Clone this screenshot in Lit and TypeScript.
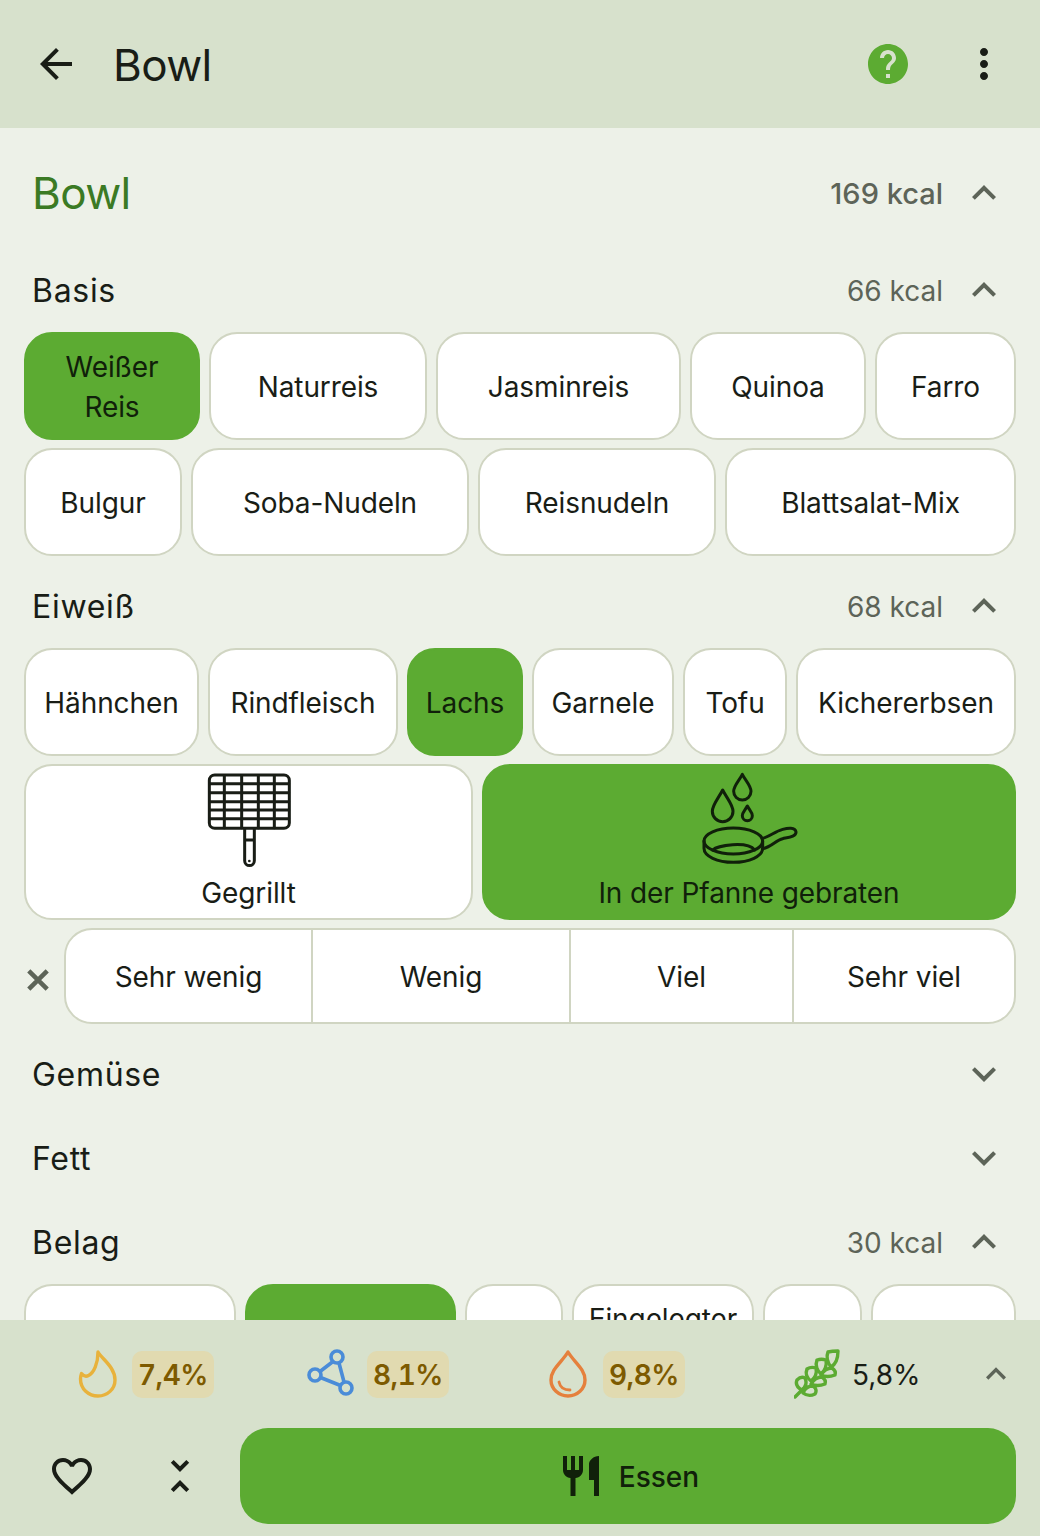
import { css, html, LitElement, svg } from "lit";
import { customElement } from "lit/decorators.js";

const P = {
  back: "M20 11H7.83l5.59-5.59L12 4l-8 8 8 8 1.41-1.41L7.83 13H20v-2z",
  help: "M12 2C6.48 2 2 6.48 2 12s4.48 10 10 10 10-4.48 10-10S17.52 2 12 2zm1 17h-2v-2h2v2zm2.07-7.75l-.9.92C13.45 12.9 13 13.5 13 15h-2v-.5c0-1.1.45-2.1 1.17-2.83l1.24-1.26c.37-.36.59-.86.59-1.41 0-1.1-.9-2-2-2s-2 .9-2 2H8c0-2.21 1.79-4 4-4s4 1.79 4 4c0 .88-.36 1.68-.93 2.25z",
  more: "M12 8c1.1 0 2-.9 2-2s-.9-2-2-2-2 .9-2 2 .9 2 2 2zm0 2c-1.1 0-2 .9-2 2s.9 2 2 2 2-.9 2-2-.9-2-2-2zm0 6c-1.1 0-2 .9-2 2s.9 2 2 2 2-.9 2-2-.9-2-2-2z",
  up: "M12 8l-6 6 1.41 1.41L12 10.83l4.59 4.58L18 14z",
  down: "M16.59 8.59L12 13.17 7.41 8.59 6 10l6 6 6-6z",
  heart: "M16.5 3c-1.74 0-3.41.81-4.5 2.09C10.91 3.81 9.24 3 7.5 3 4.42 3 2 5.42 2 8.5c0 3.78 3.4 6.86 8.55 11.54L12 21.35l1.45-1.32C18.6 15.36 22 12.28 22 8.5 22 5.42 19.58 3 16.5 3zm-4.4 15.55l-.1.1-.1-.1C7.14 14.24 4 11.39 4 8.5 4 6.5 5.5 5 7.5 5c1.54 0 3.04.99 3.57 2.36h1.87C13.46 5.99 14.96 5 16.5 5c2 0 3.5 1.5 3.5 3.5 0 2.89-3.14 5.74-7.9 10.05z",
  unfold: "M7.41 18.59L8.83 20 12 16.83 15.17 20l1.41-1.41L12 14l-4.59 4.59zm9.18-13.18L15.17 4 12 7.17 8.83 4 7.41 5.41 12 10l4.59-4.59z",
  eat: "M11 9H9V2H7v7H5V2H3v7c0 2.12 1.66 3.84 3.75 3.97V22h2.5v-9.03C11.34 12.84 13 11.12 13 9V2h-2v7zm5-3v8h2.5v8H21V2c-2.76 0-5 2.24-5 4z",
};

const icon = (d: string, cls = "") =>
  html`<svg class="icon ${cls}" viewBox="0 0 24 24"><path d=${d} fill="currentColor" /></svg>`;

const grill = html`<svg class="pic" viewBox="-3 12 420 312">
  <g fill="none" stroke="#191d16" stroke-width="9" stroke-linecap="round" stroke-linejoin="round">
    <rect x="88" y="45" width="240" height="160" rx="16" />
    <path d="M133 47v156M185 47v156M235 47v156M283 47v156" />
    <path d="M90 71h236M90 98h236M90 125h236M90 150h236M90 176h236" />
    <path d="M194 207v95a14 14 0 0 0 29 0v-95M194 240h29" />
  </g>
  <circle cx="208" cy="303" r="4" fill="#191d16" />
</svg>`;

const pan = svg`<g fill="none" stroke="#10200a" stroke-width="9" stroke-linecap="round" stroke-linejoin="round">
    <path d="M128 90c-12 24-31 44-31 64a31 31 0 0 0 62 0c0-20-19-40-31-64z" />
    <path d="M187 43c-10 20-26 34-26 51a26 26 0 0 0 52 0c0-17-16-31-26-51z" />
    <path d="M202 138c-6 12-15 19-15 29a15 15 0 0 0 30 0c0-10-9-17-15-29z" />
    <ellipse cx="160" cy="243" rx="88" ry="39" />
    <path d="M72 243v22c0 24 40 42 88 42s88-18 88-42v-22" />
    <path d="M98 270c14-14 104-28 126 0" />
    <path d="M246 236c22-6 40-22 62-28 14-4 38-8 40 8 1 14-22 16-40 20-20 4-32 24-60 30" />
  </g>`;

type Chip = { t?: string; w: number; on?: boolean };

const basis: Chip[][] = [
  [{ t: "Weißer\nReis", w: 176, on: true }, { t: "Naturreis", w: 218 }, { t: "Jasminreis", w: 245 }, { t: "Quinoa", w: 176 }, { t: "Farro", w: 141 }],
  [{ t: "Bulgur", w: 158 }, { t: "Soba-Nudeln", w: 278 }, { t: "Reisnudeln", w: 238 }, { t: "Blattsalat-Mix", w: 291 }],
];
const eiweiss: Chip[] = [
  { t: "Hähnchen", w: 175 }, { t: "Rindfleisch", w: 190 }, { t: "Lachs", w: 116, on: true },
  { t: "Garnele", w: 142 }, { t: "Tofu", w: 104 }, { t: "Kichererbsen", w: 220 },
];
const belag: Chip[] = [
  { w: 212 }, { w: 211, on: true }, { w: 98 }, { t: "Eingelegter", w: 182 }, { w: 99 }, { w: 145 },
];
const amounts = [
  { t: "Sehr wenig", w: 247 }, { t: "Wenig", w: 258 }, { t: "Viel", w: 223 }, { t: "Sehr viel", w: 220 },
];

@customElement("app-root")
export class AppRoot extends LitElement {
  section(title: string, kcal: string, open: boolean) {
    return html`<div class="sec">
      <span class="sec-title">${title}</span>
      <span class="kcal">${kcal}</span>
      ${icon(open ? P.up : P.down, "muted")}
    </div>`;
  }

  row(chips: Chip[]) {
    return html`<div class="row">
      ${chips.map(
        (c) => html`<button class="chip ${c.on ? "on" : ""}" style="flex: 0 0 ${c.w}px">${c.t}</button>`
      )}
    </div>`;
  }

  render() {
    return html`
      <header>
        ${icon(P.back)}
        <h1>Bowl</h1>
        ${icon(P.help, "green")} ${icon(P.more)}
      </header>
      <main>
        <div class="top">
          <span class="top-title">Bowl</span>
          <span class="kcal strong">169 kcal</span>
          ${icon(P.up, "muted")}
        </div>
        ${this.section("Basis", "66 kcal", true)}
        <div class="rows">${basis.map((r) => this.row(r))}</div>
        ${this.section("Eiweiß", "68 kcal", true)}
        <div class="rows">
          ${this.row(eiweiss)}
          <div class="row">
            <button class="chip big" style="flex: 0 0 449px">${grill}<span>Gegrillt</span></button>
            <button class="chip big on" style="flex: 0 0 534px">
              <svg class="pic" viewBox="-3 12 420 312">${pan}</svg><span>In der Pfanne gebraten</span>
            </button>
          </div>
          <div class="amount">
            <svg class="x" viewBox="0 0 24 24"><path d="M5.500 5.500l13 13M18.500 5.500l-13 13" /></svg>
            <div class="seg">
              ${amounts.map((a) => html`<button style="flex: 0 0 ${a.w}px">${a.t}</button>`)}
            </div>
          </div>
        </div>
        ${this.section("Gemüse", "", false)} ${this.section("Fett", "", false)}
        ${this.section("Belag", "30 kcal", true)}
        <div class="row">${belag.map((c) =>
          html`<button class="chip tall ${c.on ? "on" : ""}" style="flex: 0 0 ${c.w}px"><span>${c.t}</span></button>`
        )}</div>
      </main>
      <footer>
        <div class="stats">
          <div class="stat">
            <svg width="40" height="50" viewBox="0 0 40 50"><path d="M20 3c4 7 17 15 17 28 0 9-7.500 16-17 16S2.500 40 2.500 30c0-2.500.500-4 1-5.500 2 2.500 4.500 3.500 7 2C16 24 20 14 20 3z" fill="none" stroke="#e8b23c" stroke-width="3.400" stroke-linejoin="round" /></svg>
            <span class="badge">7,4%</span>
          </div>
          <div class="stat net">
            <svg width="48" height="50" viewBox="0 0 48 50" fill="none" stroke="#4a8cd8" stroke-width="3.600">
              <circle cx="30" cy="8" r="6" /><circle cx="8" cy="26" r="6" /><circle cx="39" cy="39" r="6" />
              <path d="M26 12.500 13 22.500M32 14l5 19M13.500 28.500 33.500 36.500" />
            </svg>
            <span class="badge">8,1%</span>
          </div>
          <div class="stat drop">
            <svg width="38" height="50" viewBox="0 0 38 50" fill="none" stroke="#e5803c" stroke-width="3.400" stroke-linecap="round" stroke-linejoin="round">
              <path d="M19 3C13 13 2 20 2 31a17 16 0 0 0 34 0C36 20 25 13 19 3z" />
              <path d="M10 33c1 5 5 8 11 8" stroke-width="2.800" />
            </svg>
            <span class="badge">9,8%</span>
          </div>
          <div class="stat wheat">
            <svg width="46" height="50" viewBox="0 0 46 50" fill="none" stroke="#5cab32" stroke-width="3.400" stroke-linecap="round" stroke-linejoin="round">
              <path d="M1 48 12 37" />
              <path d="M34 3c4-1 7-1 10-1 0 7-2 13-7 16-3-4-5-10-3-15z" />
              <path d="M23 11c3-1 6-1 9 0 1 5-1 11-5 14-4-3-6-9-4-14z" />
              <path d="M13 20c3-2 6-2 9-1 1 5-1 10-5 13-4-3-6-7-4-12z" />
              <path d="M3 31c3-3 6-3 8-2 2 4 1 9-3 12-4-2-7-5-5-10z" />
              <path d="M38 19c3 2 4 4 3 7-5 2-10 2-14 0 3-5 7-7 11-7z" />
              <path d="M28 28c3 2 4 4 3 7-5 2-10 2-14 0 3-5 7-7 11-7z" />
              <path d="M19 37c3 2 4 5 2 8-4 2-8 2-12-1 2-5 6-7 10-7z" />
            </svg>
            <span class="plain">5,8%</span>
          </div>
          ${icon(P.up, "muted small")}
        </div>
        <div class="actions">
          <span class="act">${icon(P.heart)}</span>
          <span class="act">${icon(P.unfold)}</span>
          <button class="eat">${icon(P.eat)}<span>Essen</span></button>
        </div>
      </footer>
    `;
  }

  static styles = css`
    :host {
      display: flex;
      flex-direction: column;
      width: 1040px;
      height: 1536px;
      overflow: hidden;
      background: #edf1e8;
      color: #191d16;
      font-family: Inter, Roboto, "Liberation Sans", sans-serif;
    }
    button {
      font: inherit;
      color: inherit;
      letter-spacing: inherit;
      padding: 0;
      margin: 0;
      background: none;
      border: none;
    }
    .icon {
      display: block;
      flex: none;
      width: 48px;
      height: 48px;
    }
    .muted {
      color: #5d6458;
    }
    .green {
      color: #5cab32;
      margin-right: 48px;
    }
    header {
      flex: none;
      display: flex;
      align-items: center;
      height: 128px;
      padding: 0 32px;
      background: #d7e1cc;
    }
    h1 {
      flex: 1;
      margin: 2px 0 0 33px;
      font-size: 44px;
      font-weight: 400;
      letter-spacing: -0.6px;
    }
    main {
      flex: 1;
      min-height: 0;
      overflow: hidden;
      padding-top: 10px;
    }
    .top,
    .sec {
      display: flex;
      align-items: center;
      padding: 0 32px;
    }
    .top {
      height: 110px;
    }
    .sec {
      height: 84px;
    }
    .top-title {
      flex: 1;
      font-size: 44px;
      color: #3b7a24;
      letter-spacing: -0.6px;
    }
    .sec-title {
      flex: 1;
      padding-top: 1px;
      font-size: 32px;
      letter-spacing: 0.7px;
    }
    .kcal {
      margin-right: 17px;
      padding-top: 1px;
      font-size: 28px;
      color: #5d6458;
    }
    .strong {
      font-size: 29px;
      font-weight: 500;
    }
    .rows {
      display: flex;
      flex-direction: column;
      gap: 8px;
      margin-bottom: 8px;
    }
    .row {
      display: flex;
      gap: 9px;
      padding: 0 24px;
    }
    .chip {
      display: flex;
      align-items: center;
      justify-content: center;
      min-width: 0;
      height: 108px;
      padding-top: 2px;
      box-sizing: border-box;
      background: #fff;
      border: 2px solid #d0d5c2;
      border-radius: 28px;
      font-size: 28px;
      line-height: 40px;
      letter-spacing: -0.1px;
      text-align: center;
      white-space: pre-line;
    }
    .chip.on {
      background: #5cab32;
      border-color: #5cab32;
      color: #10200a;
    }
    .chip.big {
      flex-direction: column;
      justify-content: flex-start;
      height: 156px;
      padding-top: 0;
    }
    .pic {
      display: block;
      flex: none;
      width: 140px;
      height: 104px;
      margin-top: -2px;
      margin-bottom: 5px;
    }
    .chip.tall {
      align-items: flex-start;
      padding-top: 13px;
    }
    .amount {
      display: flex;
      align-items: center;
      padding: 0 24px 0 21px;
    }
    .x {
      flex: none;
      width: 34px;
      height: 34px;
      margin-right: 9px;
      margin-top: 8px;
      fill: none;
      stroke: #5d6458;
      stroke-width: 3.200;
    }
    .seg {
      flex: 1;
      display: flex;
      height: 96px;
      box-sizing: border-box;
      overflow: hidden;
      background: #fff;
      border: 2px solid #d0d5c2;
      border-radius: 28px;
    }
    .seg button {
      min-width: 0;
      padding-top: 2px;
      box-sizing: border-box;
      font-size: 28px;
      letter-spacing: -0.1px;
      border-right: 2px solid #d0d5c2;
    }
    .seg button:last-child {
      border-right: none;
    }
    footer {
      flex: none;
      height: 216px;
      background: #d7e1cc;
    }
    .stats {
      display: grid;
      grid-template-columns: 229px 242px 245px 1fr 40px;
      align-items: center;
      height: 108px;
      padding: 0 24px 0 78px;
    }
    .stat {
      display: flex;
      align-items: center;
      gap: 14px;
      font-size: 28px;
      line-height: 47px;
    }
    .plain {
      padding-top: 2px;
    }
    .small {
      width: 40px;
      height: 40px;
    }
    .badge {
      padding: 1px 6px 0;
      box-sizing: border-box;
      height: 47px;
      border-radius: 10px;
      background: #e1dab0;
      color: #7d5a00;
      font-weight: 600;
      font-variant-numeric: tabular-nums;
      letter-spacing: -0.5px;
    }
    .net {
      gap: 12px;
    }
    .drop {
      gap: 16px;
    }
    .wheat {
      gap: 12px;
    }
    .actions {
      display: flex;
      align-items: center;
      gap: 12px;
      height: 96px;
      padding: 0 24px;
    }
    .act {
      display: flex;
      flex: none;
      align-items: center;
      justify-content: center;
      width: 96px;
      height: 96px;
    }
    .eat {
      flex: 1;
      display: flex;
      align-items: center;
      justify-content: center;
      gap: 14px;
      height: 96px;
      border-radius: 28px;
      background: #5cab32;
      color: #10200a;
      font-size: 28px;
      font-weight: 500;
    }
    .eat span {
      padding-top: 2px;
    }
  `;
}

declare global {
  interface HTMLElementTagNameMap {
    "app-root": AppRoot;
  }
}
